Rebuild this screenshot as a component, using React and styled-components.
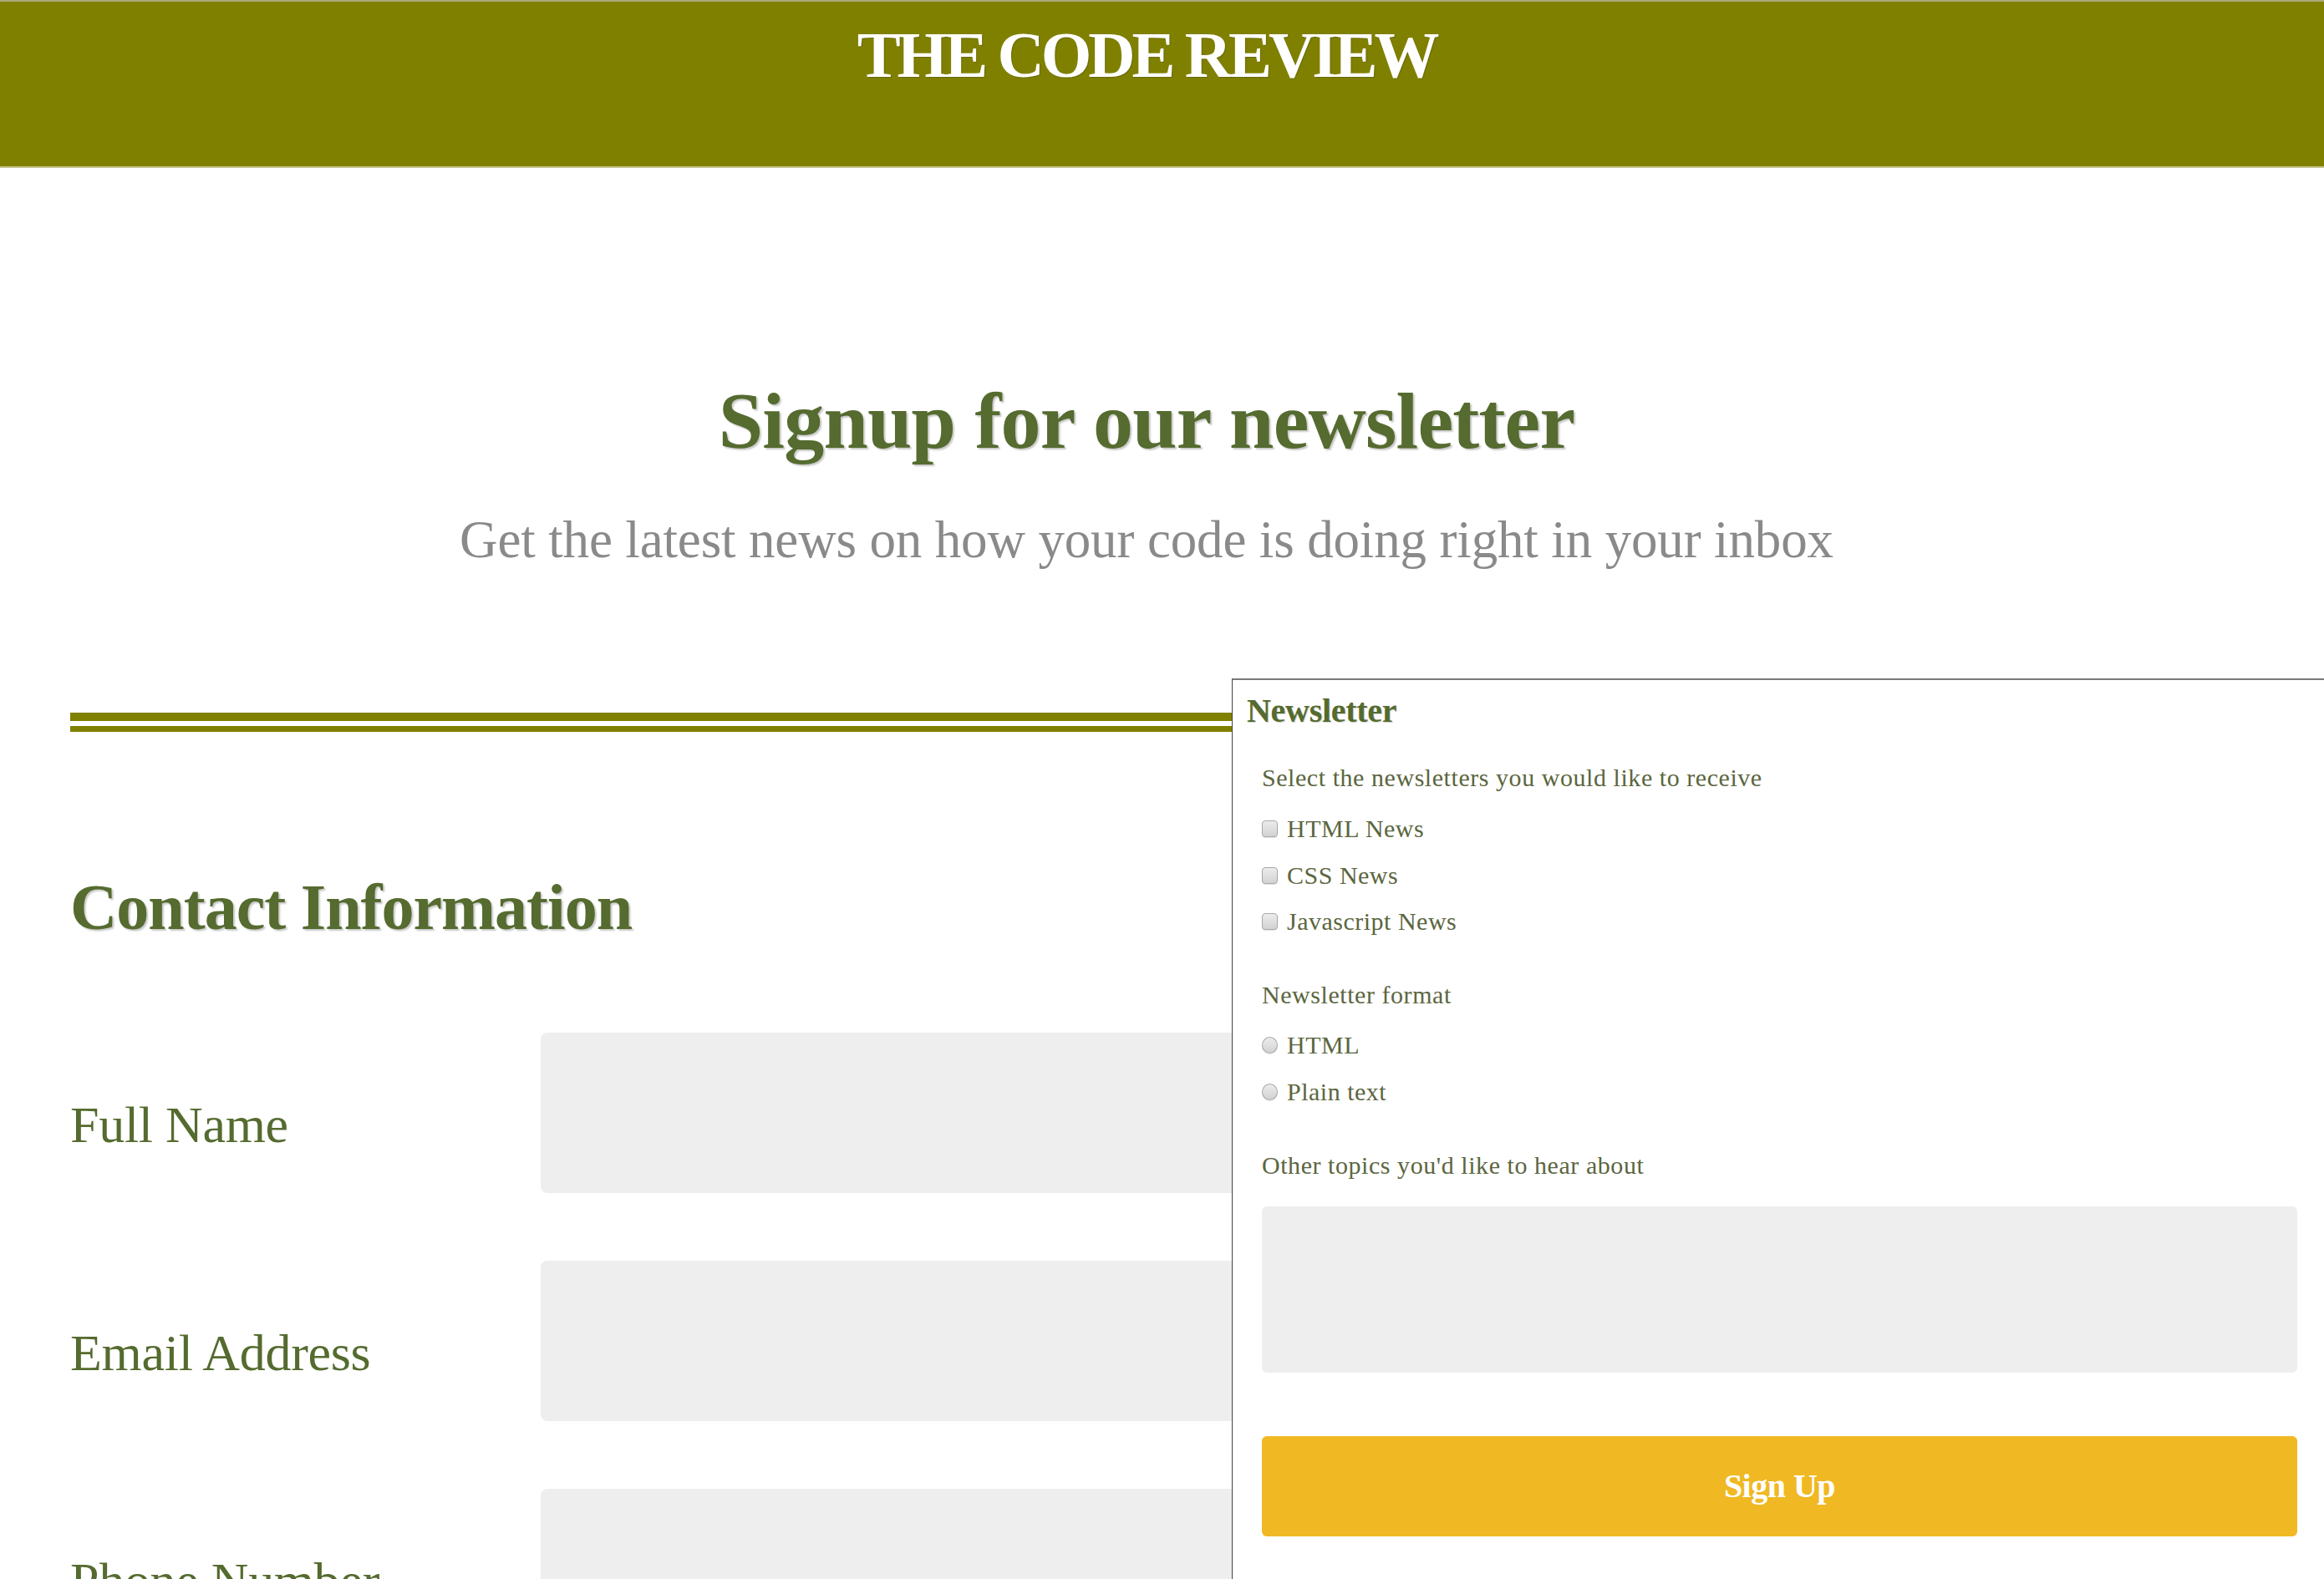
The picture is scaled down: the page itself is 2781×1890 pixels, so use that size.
import React from "react";
import styled, { createGlobalStyle } from "styled-components";

const GlobalStyle = createGlobalStyle`
  html, body {
    margin: 0;
    padding: 0;
    overflow: hidden;
    background: #ffffff;
  }
  body {
    font-family: "Liberation Serif", "Times New Roman", serif;
  }
  * { box-sizing: border-box; }
`;

const Page = styled.div`
  width: 100%;
  min-height: 1890px;
  background: #fff;
`;

const Header = styled.header`
  height: 201px;
  background: #808000;
  border-top: 2px solid #a9a97a;
  border-bottom: 2px solid #c4c48c;
  display: flex;
  justify-content: center;
  padding: 19px 37px 0 0;
`;

const SiteTitle = styled.h1`
  margin: 0;
  color: #ffffff;
  font-size: 78px;
  font-weight: 700;
  letter-spacing: -4.1px;
  line-height: normal;
  text-shadow: 1px 1px 1px rgba(60, 60, 0, 0.35);
`;

const Hero = styled.section`
  text-align: center;
  padding: 247px 37px 0 0;
`;

const HeroTitle = styled.h2`
  margin: 0;
  color: #556b2f;
  font-size: 96px;
  font-weight: 700;
  letter-spacing: -0.8px;
  line-height: normal;
  text-shadow: 2px 2px 2px rgba(0, 0, 0, 0.22);
`;

const HeroText = styled.p`
  margin: 51px 0 0;
  color: #8a8a8a;
  font-size: 63px;
  letter-spacing: -0.15px;
  line-height: normal;
`;

const FormRow = styled.form`
  display: flex;
  align-items: flex-start;
  margin-top: 129px;
  padding-left: 84px;
`;

const ContactColumn = styled.div`
  flex: 0 0 1390px;
  width: 1390px;
  padding-top: 41px;
`;

const DoubleRule = styled.div`
  height: 23px;
  border-top: 10px solid #808000;
  border-bottom: 7px solid #808000;
`;

const SectionTitle = styled.h3`
  margin: 165px 0 0;
  color: #556b2f;
  font-size: 78px;
  font-weight: 700;
  letter-spacing: -1px;
  line-height: normal;
  text-shadow: 2px 2px 2px rgba(0, 0, 0, 0.22);
`;

const Fields = styled.div`
  margin-top: 105px;
  display: flex;
  flex-direction: column;
  gap: 81px;
`;

const FieldRow = styled.div`
  display: flex;
  align-items: center;
`;

const FieldLabel = styled.label`
  flex: 0 0 563px;
  padding-top: 28px;
  color: #556b2f;
  font-size: 62px;
  letter-spacing: -0.3px;
  line-height: normal;
`;

const TextInput = styled.input`
  flex: 0 0 1000px;
  width: 1000px;
  height: 192px;
  border: none;
  border-radius: 8px;
  background: #eeeeee;
  outline: none;
`;

const Panel = styled.fieldset`
  position: relative;
  z-index: 1;
  flex: 0 0 1310px;
  width: 1310px;
  margin: 0;
  min-width: 0;
  background: #ffffff;
  border: none;
  border-top: 2px solid #7a7a7a;
  border-left: 1px solid #444444;
  padding: 13px 35px 60px 35px;
  display: flex;
  flex-direction: column;
`;

const PanelTitle = styled.div`
  margin-left: -18px;
  color: #556b2f;
  font-size: 40px;
  font-weight: 700;
  letter-spacing: -0.3px;
  line-height: normal;
  text-shadow: 1px 1px 1px rgba(0, 0, 0, 0.18);
`;

const GroupLabel = styled.div`
  margin-top: ${(p) => p.$gap}px;
  color: #5b6640;
  font-size: 30px;
  letter-spacing: 0.55px;
  line-height: normal;
`;

const OptionList = styled.div`
  margin-top: ${(p) => p.$gap}px;
  display: flex;
  flex-direction: column;
  gap: 21.5px;
`;

const Option = styled.label`
  display: flex;
  align-items: center;
  gap: 11px;
  color: #5b6640;
  font-size: 30px;
  letter-spacing: 0.5px;
  line-height: normal;
`;

const Check = styled.input`
  appearance: none;
  -webkit-appearance: none;
  margin: 0;
  width: 19px;
  height: 20px;
  border: 1px solid #a8a8a8;
  border-radius: ${(p) => (p.type === "radio" ? "50%" : "4px")};
  background: linear-gradient(#ececec, #d2d2d2);
  box-shadow: 0 1px 1px rgba(0, 0, 0, 0.12);
  flex: 0 0 auto;
`;

const TextArea = styled.textarea`
  margin-top: 32px;
  width: 100%;
  height: 199px;
  border: none;
  border-radius: 6px;
  background: #eeeeee;
  resize: none;
  outline: none;
`;

const SubmitButton = styled.button`
  margin-top: 76px;
  width: 100%;
  height: 120px;
  border: none;
  border-radius: 6px;
  background: #f0b823;
  color: #ffffff;
  font-family: "Liberation Serif", "Times New Roman", serif;
  font-size: 40px;
  font-weight: 700;
  letter-spacing: -0.5px;
  line-height: normal;
  padding: 0;
  cursor: pointer;
`;

const contactFields = ["Full Name", "Email Address", "Phone Number"];
const newsletters = ["HTML News", "CSS News", "Javascript News"];
const formats = ["HTML", "Plain text"];

export default function App() {
  return (
    <Page>
      <GlobalStyle />
      <Header>
        <SiteTitle>THE CODE REVIEW</SiteTitle>
      </Header>
      <Hero>
        <HeroTitle>Signup for our newsletter</HeroTitle>
        <HeroText>Get the latest news on how your code is doing right in your inbox</HeroText>
      </Hero>
      <FormRow onSubmit={(e) => e.preventDefault()}>
        <ContactColumn>
          <DoubleRule />
          <SectionTitle>Contact Information</SectionTitle>
          <Fields>
            {contactFields.map((f) => (
              <FieldRow key={f}>
                <FieldLabel>{f}</FieldLabel>
                <TextInput type="text" aria-label={f} />
              </FieldRow>
            ))}
          </Fields>
        </ContactColumn>
        <Panel>
          <PanelTitle>Newsletter</PanelTitle>
          <GroupLabel $gap={40}>Select the newsletters you would like to receive</GroupLabel>
          <OptionList $gap={27}>
            {newsletters.map((n) => (
              <Option key={n}>
                <Check type="checkbox" />
                {n}
              </Option>
            ))}
          </OptionList>
          <GroupLabel $gap={54}>Newsletter format</GroupLabel>
          <OptionList $gap={26}>
            {formats.map((n) => (
              <Option key={n}>
                <Check type="radio" name="format" />
                {n}
              </Option>
            ))}
          </OptionList>
          <GroupLabel $gap={54}>Other topics you'd like to hear about</GroupLabel>
          <TextArea aria-label="Other topics" />
          <SubmitButton type="submit">Sign Up</SubmitButton>
        </Panel>
      </FormRow>
    </Page>
  );
}
